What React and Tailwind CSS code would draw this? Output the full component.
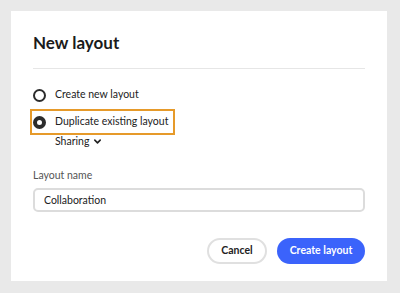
import React, { useState } from 'react';

export default function App() {
  const [choice, setChoice] = useState('duplicate');
  const [name, setName] = useState('Collaboration');

  return (
    <div className="w-[400px] h-[293px] bg-[#e9e9e9] p-[11px] pr-[13px] pb-[12px] font-['Lato',sans-serif] text-[#222]">
      <div className="bg-white h-full px-[22px] pt-[21px]">
        {/* Header */}
        <h1 className="text-[17px] font-bold leading-[22px] text-[#1b1b1b]">New layout</h1>
        <div className="mt-[14px] h-px bg-[#e6e6e6]" />

        {/* Options */}
        <div className="mt-[16px] flex flex-col">
          <label className="flex items-center gap-[9px] h-[20px] cursor-pointer whitespace-nowrap" onClick={() => setChoice('new')}>
            <span className={`w-[13px] h-[13px] rounded-full border-[#2c2c2c] ${choice === 'new' ? 'border-[4px]' : 'border-[2px]'}`} />
            <span className="text-[10.5px]">Create new layout</span>
          </label>
          <div className="mt-[4px] -ml-[3px] w-fit h-[26px] border-[2px] border-[#e69a2a] flex items-center pl-[1px] pr-[5px]">
            <label className="flex items-center gap-[9px] cursor-pointer whitespace-nowrap" onClick={() => setChoice('duplicate')}>
              <span className={`w-[13px] h-[13px] rounded-full border-[#2c2c2c] ${choice === 'duplicate' ? 'border-[4px]' : 'border-[2px]'}`} />
              <span className="text-[10.5px]">Duplicate existing layout</span>
            </label>
          </div>
          <button className="-mt-[1px] ml-[22px] flex items-center gap-[4px] text-[10.5px] leading-[14px] w-fit">
            Sharing
            <svg width="9" height="9" viewBox="0 0 10 10" fill="none" stroke="#222" strokeWidth="1.8" strokeLinecap="round" strokeLinejoin="round">
              <path d="M2 3.5 5 6.5 8 3.5" />
            </svg>
          </button>
        </div>

        {/* Name field */}
        <div className="mt-[20px]">
          <div className="text-[10.5px] leading-[14px] text-[#555]">Layout name</div>
          <input
            value={name}
            onChange={(e) => setName(e.target.value)}
            className="mt-[6px] w-full h-[24px] border-[2px] border-[#dcdcdc] rounded-[5px] px-[9px] text-[10.5px] text-[#222] outline-none"
          />
        </div>

        {/* Actions */}
        <div className="mt-[26px] flex justify-end gap-[10px]">
          <button className="h-[26px] w-[60px] rounded-full border-[2px] border-[#e0e0e0] text-[10.5px] font-bold text-[#222]">Cancel</button>
          <button className="h-[26px] w-[88px] rounded-full bg-[#3b63fb] text-[10.5px] font-bold text-white">Create layout</button>
        </div>
      </div>
    </div>
  );
}
